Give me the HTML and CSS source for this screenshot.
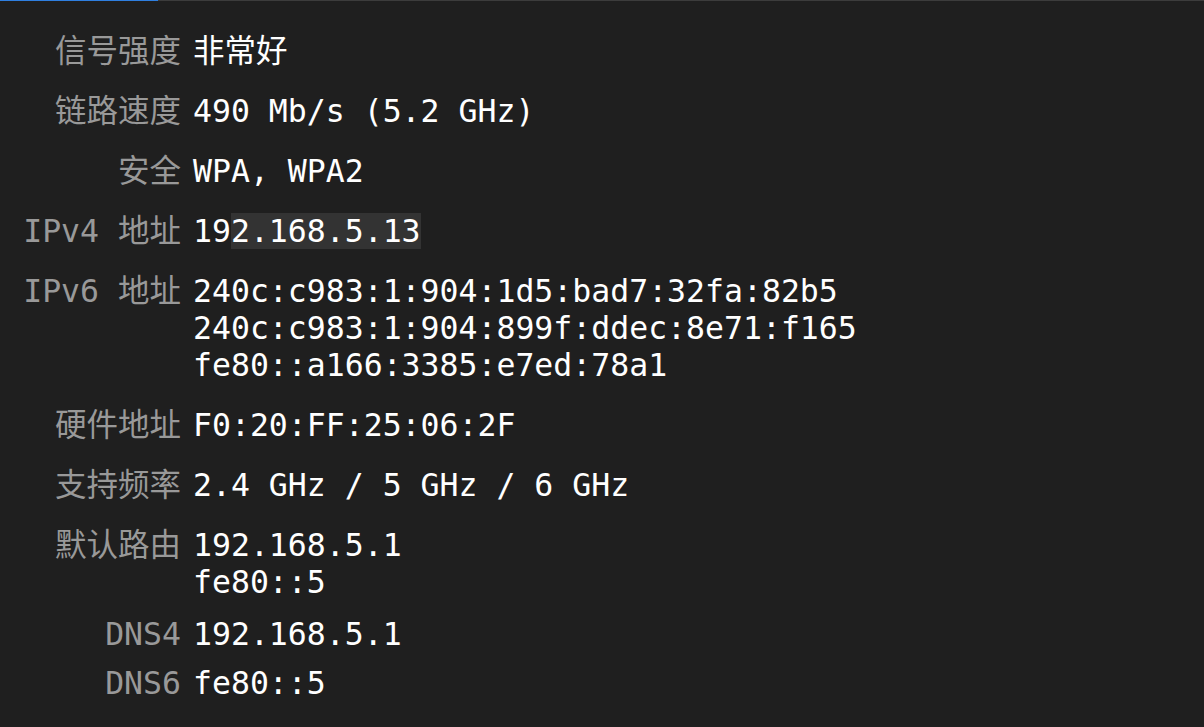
FILE: index.html
```html
<!DOCTYPE html>
<html lang="zh-CN">
<head>
<meta charset="utf-8">
<link rel="stylesheet" href="styles.css">
</head>
<body>
<div class="topbar"><div class="topbar-active"></div></div>
<div class="info">
  <div class="row"><div class="label">信号强度</div><div class="value">非常好</div></div>
  <div class="row"><div class="label">链路速度</div><div class="value">490 Mb/s (5.2 GHz)</div></div>
  <div class="row"><div class="label">安全</div><div class="value">WPA, WPA2</div></div>
  <div class="row"><div class="label">IPv4 地址</div><div class="value">19<span class="hl">2.168.5.13</span></div></div>
  <div class="row"><div class="label">IPv6 地址</div><div class="value">240c:c983:1:904:1d5:bad7:32fa:82b5<br>240c:c983:1:904:899f:ddec:8e71:f165<br>fe80::a166:3385:e7ed:78a1</div></div>
  <div class="row"><div class="label">硬件地址</div><div class="value">F0:20:FF:25:06:2F</div></div>
  <div class="row"><div class="label">支持频率</div><div class="value">2.4 GHz / 5 GHz / 6 GHz</div></div>
  <div class="row"><div class="label">默认路由</div><div class="value">192.168.5.1<br>fe80::5</div></div>
  <div class="row row-dns4"><div class="label">DNS4</div><div class="value">192.168.5.1</div></div>
  <div class="row row-dns6"><div class="label">DNS6</div><div class="value">fe80::5</div></div>
</div>
</body>
</html>
```
FILE: styles.css
```css
html, body {
  margin: 0;
  padding: 0;
  background: #1f1f1f;
  height: 100%;
}
body {
  font-family: "DejaVu Sans Mono", "Noto Sans CJK SC", monospace;
  font-size: 31.5px;
  line-height: 37px;
  color: #ffffff;
}
.topbar {
  height: 1px;
  background: #3c3c3c;
}
.topbar-active {
  width: 158px;
  height: 1px;
  background: #2f7fe0;
}
.info {
  display: flex;
  flex-direction: column;
  padding-top: 32px;
}
.row {
  display: flex;
  align-items: baseline;
  column-gap: 12px;
  margin-top: 23px;
}
.row:first-child {
  margin-top: 0;
}
.row-dns4 {
  margin-top: 15px;
}
.row-dns6 {
  margin-top: 12px;
}
.label {
  flex: 0 0 181px;
  text-align: right;
  color: #999999;
  white-space: nowrap;
}
.value {
  white-space: nowrap;
}
.hl {
  background: #333333;
}
```
